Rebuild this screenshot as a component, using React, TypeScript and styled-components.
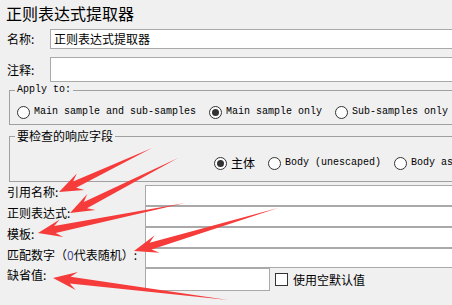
import React from "react";
import styled, { createGlobalStyle } from "styled-components";

const Global = createGlobalStyle`
  html, body { margin: 0; padding: 0; background: #f0f0f0; overflow: hidden; }
  * { box-sizing: border-box; }
`;

const CJK = `"Noto Sans CJK SC", "Noto Sans", sans-serif`;
const MONO = `"Liberation Mono", "Noto Sans CJK SC", monospace`;

const Page = styled.div`
  position: relative;
  width: 452px;
  height: 305px;
  overflow: hidden;
  background: #f0f0f0;
  font-family: ${CJK};
  font-size: 12px;
  color: #000;
`;

const Title = styled.div`
  font-size: 16px;
  line-height: 20px;
  padding: 3px 0 0 6px;
  height: 29px;
`;

const FieldRow = styled.div<{ $h: number; $mt: number }>`
  display: flex;
  align-items: center;
  height: ${(p) => p.$h}px;
  margin-top: ${(p) => p.$mt}px;
`;

const RowLabel = styled.div`
  width: 50px;
  padding-left: 7px;
  line-height: 14px;
  flex: none;
`;

const TextBox = styled.div`
  flex: 1;
  align-self: stretch;
  margin-right: -4px;
  background: #fff;
  border: 1px solid #a9a9a9;
  padding-left: 3px;
  display: flex;
  align-items: center;
  line-height: 14px;
`;

const Group = styled.fieldset<{ $mt: number; $pt: number; $pb: number }>`
  margin: ${(p) => p.$mt}px -10px 0 9px;
  padding: ${(p) => p.$pt}px 0 ${(p) => p.$pb}px 7px;
  border: 1px solid #a0a0a0;
  min-width: 0;
`;

const Legend = styled.legend<{ $mono?: boolean }>`
  margin-left: -2px;
  padding: 0 2px;
  font-family: ${(p) => (p.$mono ? MONO : CJK)};
  font-size: ${(p) => (p.$mono ? "10px" : "12px")};
  line-height: ${(p) => (p.$mono ? "12px" : "14px")};
`;

const RadioRow = styled.div<{ $indent?: number }>`
  display: flex;
  align-items: center;
  height: 16px;
  gap: 13px;
  white-space: nowrap;
  margin-left: ${(p) => p.$indent ?? 0}px;
`;

const RadioItem = styled.div`
  display: flex;
  align-items: center;
  gap: 4px;
`;

const RadioDot = styled.span<{ $on?: boolean }>`
  width: 13px;
  height: 13px;
  border-radius: 50%;
  border: 1px solid #333;
  background: #fff;
  display: inline-flex;
  align-items: center;
  justify-content: center;
  flex: none;
  &::after {
    content: "";
    width: 7px;
    height: 7px;
    border-radius: 50%;
    background: ${(p) => (p.$on ? "#333" : "transparent")};
  }
`;

const RadioText = styled.span<{ $mono?: boolean }>`
  font-family: ${(p) => (p.$mono ? MONO : CJK)};
  font-size: ${(p) => (p.$mono ? "10px" : "12px")};
  line-height: 14px;
`;

const Form = styled.div`
  display: grid;
  grid-template-columns: 138px 1fr;
  grid-template-rows: 21px 21px 21px 20px 23px;
  margin-top: 3px;
  padding-left: 7px;
`;

const FormLabel = styled.div`
  line-height: 14px;
  white-space: nowrap;
`;

const FormBox = styled.div`
  background: #fff;
  border: 1px solid #a9a9a9;
  margin-right: -4px;
`;

const LastCell = styled.div`
  display: flex;
  align-items: center;
  gap: 5px;
`;

const ShortBox = styled.div`
  width: 125px;
  height: 23px;
  background: #fff;
  border: 1px solid #a9a9a9;
  flex: none;
`;

const CheckBox = styled.span`
  width: 13px;
  height: 13px;
  border: 1px solid #333;
  background: #fff;
  flex: none;
`;

const Zero = styled.span`
  color: #4a4a9a;
`;

const Overlay = styled.svg`
  position: absolute;
  left: 0;
  top: 0;
  pointer-events: none;
`;

type Arrow = [number, number, number, number];

const arrows: Arrow[] = [
  [152, 148, 59, 192],
  [178, 158, 70, 213],
  [185, 203, 38, 233],
  [278, 208, 134, 251],
  [228, 300, 53, 278],
];

function arrowPoints([tx, ty, px, py]: Arrow): string {
  const dx = px - tx;
  const dy = py - ty;
  const len = Math.hypot(dx, dy);
  const ux = dx / len;
  const uy = dy / len;
  const nx = -uy;
  const ny = ux;
  const h = 24;
  const w = 9;
  const s = 3.5;
  const bx = px - ux * h;
  const by = py - uy * h;
  const mx = px - ux * h * 0.72;
  const my = py - uy * h * 0.72;
  const pts = [
    [tx, ty],
    [mx + nx * s, my + ny * s],
    [bx + nx * w, by + ny * w],
    [px, py],
    [bx - nx * w, by - ny * w],
    [mx - nx * s, my - ny * s],
  ];
  return pts.map((p) => `${p[0].toFixed(1)},${p[1].toFixed(1)}`).join(" ");
}

export default function App() {
  return (
    <Page>
      <Global />
      <Title>正则表达式提取器</Title>
      <FieldRow $h={20} $mt={0}>
        <RowLabel>名称:</RowLabel>
        <TextBox>正则表达式提取器</TextBox>
      </FieldRow>
      <FieldRow $h={25} $mt={8}>
        <RowLabel>注释:</RowLabel>
        <TextBox />
      </FieldRow>

      <Group $mt={2} $pt={8} $pb={4}>
        <Legend $mono>Apply to:</Legend>
        <RadioRow>
          <RadioItem>
            <RadioDot />
            <RadioText $mono>Main sample and sub-samples</RadioText>
          </RadioItem>
          <RadioItem>
            <RadioDot $on />
            <RadioText $mono>Main sample only</RadioText>
          </RadioItem>
          <RadioItem>
            <RadioDot />
            <RadioText $mono>Sub-samples only</RadioText>
          </RadioItem>
        </RadioRow>
      </Group>

      <Group $mt={4} $pt={12} $pb={10}>
        <Legend>要检查的响应字段</Legend>
        <RadioRow $indent={197}>
          <RadioItem>
            <RadioDot $on />
            <RadioText>主体</RadioText>
          </RadioItem>
          <RadioItem>
            <RadioDot />
            <RadioText $mono>Body (unescaped)</RadioText>
          </RadioItem>
          <RadioItem>
            <RadioDot />
            <RadioText $mono>Body as</RadioText>
          </RadioItem>
        </RadioRow>
      </Group>

      <Form>
        <FormLabel>引用名称:</FormLabel>
        <FormBox />
        <FormLabel>正则表达式:</FormLabel>
        <FormBox />
        <FormLabel>模板:</FormLabel>
        <FormBox />
        <FormLabel>
          匹配数字（<Zero>0</Zero>代表随机）:
        </FormLabel>
        <FormBox />
        <FormLabel>缺省值:</FormLabel>
        <LastCell>
          <ShortBox />
          <CheckBox />
          <span>使用空默认值</span>
        </LastCell>
      </Form>

      <Overlay width={452} height={305} viewBox="0 0 452 305">
        {arrows.map((a, i) => (
          <polygon key={i} points={arrowPoints(a)} fill="#f63b3b" />
        ))}
      </Overlay>
    </Page>
  );
}
